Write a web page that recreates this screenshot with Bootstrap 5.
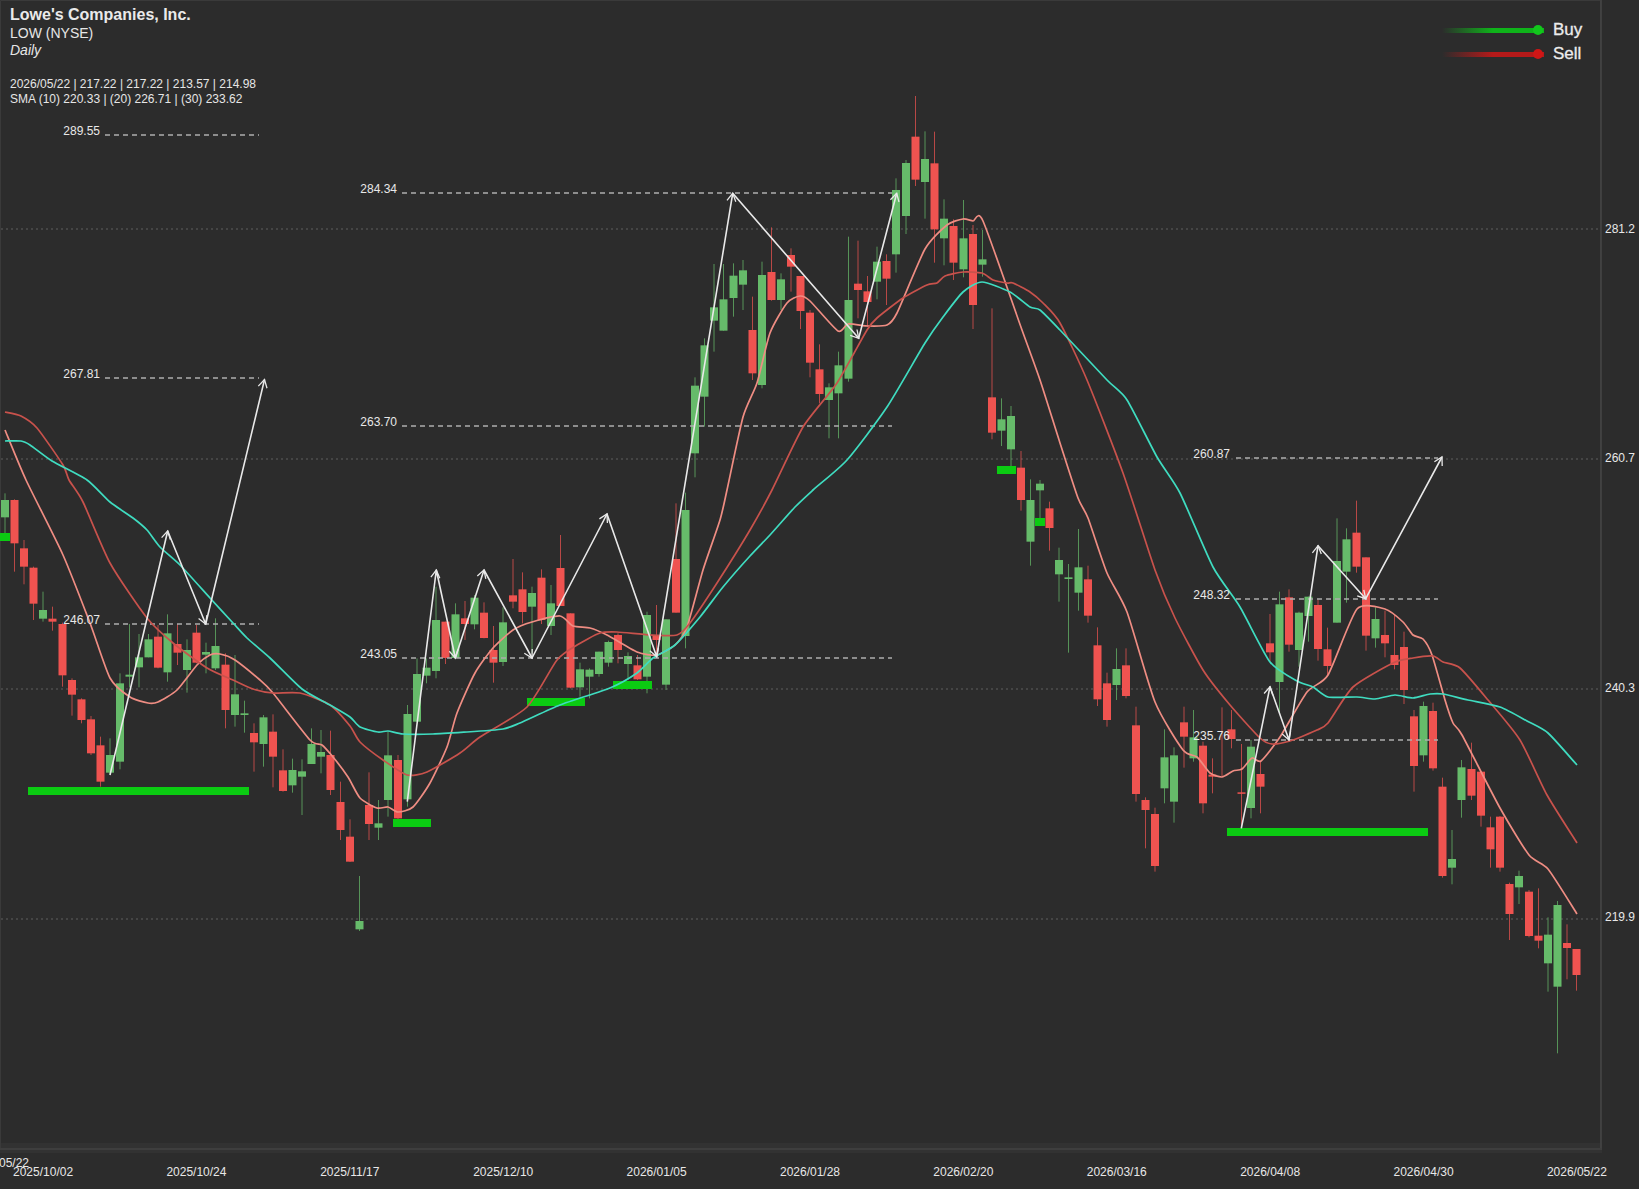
<!DOCTYPE html>
<html lang="en">
<head>
<meta charset="utf-8">
<title>Lowe's Companies, Inc. chart</title>
<link href="https://cdn.jsdelivr.net/npm/bootstrap@5.3.0/dist/css/bootstrap.min.css" rel="stylesheet">
<style>
html,body{height:100%;margin:0;background:#2c2c2c;overflow:hidden}
body,svg text{font-family:"Liberation Sans",Arial,sans-serif;color:#e8e8e8}
.screen{width:1639px;height:1189px}
.plot{width:1602px;height:1150px;flex:none}
.plot svg{display:block;overflow:visible}
.head{top:5px;left:10px;line-height:1;pointer-events:none}
.head .t{font-size:16px;font-weight:700;line-height:19px;color:#eaeaea}
.head .s{font-size:14px;line-height:18px;color:#e6e6e6}
.head .d{font-size:14px;line-height:16px;font-style:italic;color:#e6e6e6}
.head .q{font-size:12px;line-height:15px;margin-top:19px;color:#e6e6e6}
.head .q2{margin-top:0}
.legend{top:20px;right:0;gap:4px;width:160px}
.legend .row-l{height:20px;gap:10px}
.legend .bar{width:102px;height:5px}
.legend .buy .bar{background:linear-gradient(90deg,rgba(12,200,20,0),#0fb31a 50%,#0fb31a)}
.legend .sell .bar{background:linear-gradient(90deg,rgba(200,20,20,0),#b51a1a 50%,#b51a1a)}
.legend .dot{width:10px;height:10px;margin-left:-11px;flex:none}
.legend .buy .dot{background:#12c61c}
.legend .sell .dot{background:#d01616}
.legend .lab{font-size:17px;line-height:20px;color:#ececec;-webkit-text-stroke:.3px #ececec}
.yaxis{width:37px;padding:222px 0 0 3px;gap:215.4px;font-size:12px;line-height:14px}
.xaxis{height:39px;padding:15px 32px 0 13px;font-size:12px;line-height:14px}
.xaxis span{width:60px;text-align:center;white-space:nowrap}
.xaxis .tail{width:auto;top:6px;left:-1px}
.lvl{font-size:12px;fill:#e8e8e8}
</style>
</head>
<body>
<div class="screen d-flex flex-column">
  <div class="d-flex">
    <div class="plot position-relative">
      <svg id="chart" width="1602" height="1150" viewBox="0 0 1602 1150" xmlns="http://www.w3.org/2000/svg"></svg>
      <div class="head position-absolute">
        <div class="t">Lowe's Companies, Inc.</div>
        <div class="s">LOW (NYSE)</div>
        <div class="d">Daily</div>
        <div class="q">2026/05/22 | 217.22 | 217.22 | 213.57 | 214.98</div>
        <div class="q q2">SMA (10) 220.33 | (20) 226.71 | (30) 233.62</div>
      </div>
      <div class="legend position-absolute d-flex flex-column">
        <div class="buy row-l d-flex align-items-center"><div class="d-flex align-items-center"><div class="bar"></div><div class="dot rounded-circle"></div></div><span class="lab">Buy</span></div>
        <div class="sell row-l d-flex align-items-center"><div class="d-flex align-items-center"><div class="bar"></div><div class="dot rounded-circle"></div></div><span class="lab">Sell</span></div>
      </div>
    </div>
    <div class="yaxis d-flex flex-column"><div>281.2</div><div>260.7</div><div>240.3</div><div>219.9</div></div>
  </div>
  <div class="xaxis position-relative d-flex justify-content-between">
    <span class="tail position-absolute">05/22</span>
    <span>2025/10/02</span><span>2025/10/24</span><span>2025/11/17</span><span>2025/12/10</span><span>2026/01/05</span><span>2026/01/28</span><span>2026/02/20</span><span>2026/03/16</span><span>2026/04/08</span><span>2026/04/30</span><span>2026/05/22</span>
  </div>
</div>
<script>
// candles: colour wickTop bodyTop bodyBottom wickBottom, in crop units (y0 + z/3)
const seg=[
[480,`g 40 60 112 165;r 58 60 190 275;r 180 205 260 313;r 260 263 371 420;g 335 390 416 425;r 380 416 425 452;r 428 432 586 620;r 595 600 644 707;r 655 658 720 730;r 708 718 820 825;r 770 796 905 920;g 775 825 878 885;g 580 610 845 868;g 432 584 590 622;g 462 532 562 622;g 462 478 532 532;r 435 470 563 565;g 403 460 577 605;r 432 492 518 555;g 478 510 570 638;r 435 458 548 550;g 488 516 524 580;g 415 498 565 570;r 520 554 690 745;g 525 643 705 740;g 662 700 705 758;r 730 759 787 875;g 705 712 792 860;r 703 755 830 922;r 808 871 933 935;g 836 870 916 938;g 838 874 890 1005;g 745 792 852 852;g 750 816 830 880;r 752 825 930 945;r 905 966 1050 1080;r 1018 1070 1145 1146;g 1188 1323 1348 1353`],
[520,`r 757 855 912 960;g 840 910 923 960;g 635 706 840 890;r 705 720 895 900;g 555 582 838 860;g 415 462 605 605;g 415 443 467 490;g 200 300 453 475;r 305 305 414 432;g 250 283 414 418;r 243 295 312 360;g 225 233 313 328;r 247 278 354 355;r 318 390 428 488;g 262 307 426 438;r 117 226 245 265;r 157 208 276 310;g 200 219 260 400;r 148 173 300 312;g 195 250 318 345;r 45 144 258 258;r 280 280 503 505;g 428 448 502 530;g 445 449 470 535;g 395 395 462 470;g 362 366 428 440;r 340 345 390 430;g 397 408 432 480;r 405 436 478 480;g 275 285 470 520;r 255 345 360 410;g 298 298 494 510`],
[340,`r 490 657 818 818;g 458 510 888 925`],
[90,`g 862 887 1090 1162;g 745 766 920 1010;g 522 652 692 785;g 522 628 722 722;g 520 557 624 680;g 510 541 584 660;r 620 720 850 870;g 515 555 885 895;r 412 546 630 632;g 550 568 630 660;r 475 495 530 605;r 558 558 663 717;r 660 668 818 862;r 763 838 912 940;g 880 892 930 1045;g 785 826 910 1045;g 440 630 866 875;r 452 581 600 685;r 558 604 636 710;g 470 515 575 628;r 493 513 566 645;g 265 300 493 548;g 210 219 378 432;r 18 140 269 288;g 124 207 276 386;r 125 220 418 518;g 328 386 445 526;r 388 408 518 570;g 330 445 538 562;r 405 432 645 717;g 420 508 524 560;r 655 922 1028 1048;g 925 988 1022 1068;g 948 978 1078 1128`],
[380,`r 213 263 360 392;g 298 360 485 557;g 300 311 331 415;r 365 385 444 512;g 503 540 583 665;g 552 592 597 818;g 447 562 638 692;r 557 598 707 728;r 742 796 958 978;r 878 910 1020 1040;g 805 867 915 960;r 805 856 948 955;r 980 1036 1242 1265;r 1252 1260 1290 1405;r 1283 1302 1458 1475;g 1048 1132 1225 1270;g 1102 1126 1265 1328;r 980 1027 1070 1163;g 990 1072 1135 1145;r 1085 1097 1270 1300;r 1135 1184 1190 1240;r 982 1100 1100 1190;r 990 1048 1077 1105;r 1092 1237 1241 1345;g 1080 1100 1284 1315;r 1145 1182 1220 1300`],
[480,`r 402 490 517 545;g 335 373 606 700;r 328 352 494 515;g 395 398 510 560;g 350 350 408 485;r 358 375 507 542;r 443 508 558 585;g 115 243 428 428;g 145 178 275 368;r 62 158 260 278;r 232 232 467 512;g 382 417 475 503;r 392 465 490 532;r 405 525 555 568;r 455 501 630 672`],
[700,`r 30 49 198 275;g 5 18 166 185;r 8 33 205 212;r 233 260 528 533;g 390 477 503 553;g 180 202 300 353;r 128 207 287 300;r 215 215 347 380;r 350 382 448 503;r 348 350 503 515;r 548 552 642 720;g 512 528 562 612;r 570 575 708 712;r 565 707 722 745;g 652 704 790 875;g 603 615 860 1060;r 673 729 744 838;r 747 747 825 872`]
];
const RED='#ef5350',GRN='#66bb6a',px=i=>4.8+9.585*i;
let s='',n=0;
// frame
s+='<rect x="0" y="1143" width="1602" height="10" fill="#323232"/>';
s+='<path d="M0.5 0.5H1600.5V1148.5H0.5Z" fill="none" stroke="#3a3a3a"/><path d="M1601 0V1150" stroke="#444" stroke-width="1.6" fill="none"/><path d="M0 1149H1602" stroke="#3e3e3e" stroke-width="2" fill="none"/>';
// horizontal grid
[229,459,689,919].forEach(y=>s+=`<path d="M1 ${y}H1600" stroke="#5e5e5e" stroke-width="1" stroke-dasharray="2 3" fill="none"/>`);
// candles
seg.forEach(([y0,str])=>str.split(';').forEach(r=>{
  const p=r.split(' '),c=p[0]=='g'?GRN:RED,[a,b,d,e]=p.slice(1).map(v=>y0+v/3),x=Math.round(px(n)*2)/2;
  s+=`<path d="M${x} ${a}V${e}" stroke="${c}" stroke-opacity=".72" fill="none"/>`;
  if(d>b)s+=`<rect x="${x-4}" y="${b}" width="8" height="${Math.max(d-b,1.5)}" fill="${c}"/>`;
  n++;
}));
// support markers
[[28,249,787],[0,10,533],[393,431,819],[527,585,698],[613,652,681],[997,1016,466],[1035,1045,518],[1227,1428,828]].forEach(([a,b,y])=>s+=`<rect x="${a}" y="${y}" width="${b-a}" height="8" fill="#0bcb12"/>`);
// price levels
[[105,259,135],[105,259,378],[105,259,624],[402,892,193],[402,892,426],[402,892,658],[1236,1438,458],[1236,1438,599],[1236,1438,740]].forEach(([a,b,y])=>{
  s+=`<path d="M${a} ${y}H${b}" stroke="#adadad" stroke-width="1.4" stroke-dasharray="5 4" fill="none"/>`;
});
// moving averages, smoothed through the sampled points
const sma=[
['#ef8d83','5 430 26 480 63 555 90 623 110 678 130 697 148 703 158 702 177 690 197 665 210 655 220 654 235 660 260 680 273 693 310 740 322 745 333 757 348 777 360 798 377 808 388 807 398 812 413 807 430 783 447 747 457 713 475 673 493 648 513 630 532 622 560 616 573 626 590 628 607 635 637 652 657 655 675 645 687 627 703 570 720 520 727 490 743 417 757 383 770 333 787 303 800 296 810 301 838 331 848 324 868 326 887 325 897 313 925 249 947 225 963 219 973 221 983 221 1022 330 1040 380 1060 443 1078 498 1088 518 1107 573 1127 612 1155 702 1183 750 1197 757 1210 773 1222 777 1233 771 1242 769 1252 758 1261 761 1280 737 1307 692 1328 675 1357 609 1385 609 1403 622 1413 635 1423 639 1432 655 1445 700 1453 723 1462 735 1500 808 1529 855 1548 869 1577 914'],
['#c8524c','5 412 21 416 37 428 63 465 69 480 83 502 110 563 147 618 173 643 207 668 233 680 253 689 273 693 300 693 330 705 350 726 360 742 383 760 407 775 427 772 460 753 480 737 527 707 557 660 577 645 600 633 617 632 650 635 677 635 690 623 717 583 750 530 772 490 803 427 837 383 867 330 877 318 903 298 927 285 937 283 945 276 963 272 982 273 993 280 1007 283 1013 283 1030 292 1043 303 1060 323 1087 380 1123 473 1155 570 1175 618 1203 670 1230 705 1260 738 1272 744 1290 741 1317 730 1328 723 1353 687 1393 663 1413 658 1433 656 1443 662 1460 668 1488 700 1520 740 1547 795 1577 843'],
['#3fdcc0','5 441 21 441 30 445 52 461 87 480 110 502 133 518 147 530 160 547 180 565 210 598 233 623 247 638 270 658 302 689 330 705 350 717 360 727 378 732 388 731 403 734 433 734 467 732 503 729 520 723 560 705 610 688 637 673 653 658 675 645 700 617 723 587 750 556 770 535 795 507 813 490 847 460 887 407 925 343 943 317 963 292 982 282 1010 292 1030 307 1040 310 1060 330 1107 380 1127 400 1157 457 1180 493 1213 567 1240 607 1270 662 1297 681 1313 687 1328 697 1357 697 1375 699 1395 695 1413 698 1430 694 1443 694 1468 700 1500 707 1527 721 1548 733 1577 765']
];
function smooth(str){
  const v=str.split(' ').map(Number),P=[];
  for(let i=0;i<v.length;i+=2)P.push([v[i],v[i+1]]);
  let d=`M${P[0][0]} ${P[0][1]}`;
  for(let i=0;i<P.length-1;i++){
    const a=P[Math.max(i-1,0)],b=P[i],c=P[i+1],e=P[Math.min(i+2,P.length-1)];
    const f=.11;
    d+=`C${(b[0]+(c[0]-a[0])*f).toFixed(1)} ${(b[1]+(c[1]-a[1])*f).toFixed(1)} ${(c[0]-(e[0]-b[0])*f).toFixed(1)} ${(c[1]-(e[1]-b[1])*f).toFixed(1)} ${c[0]} ${c[1]}`;
  }
  return d;
}
sma.forEach(([c,p])=>s+=`<path d="${smooth(p)}" fill="none" stroke="${c}" stroke-width="1.7" stroke-linejoin="round"/>`);
// zigzag arrows
const zig=[
[[110,775],[167.7,531],[205.7,624],[264.5,379.6]],
[[407.3,801.7],[436.3,570],[455.3,658],[484,570],[532,658],[607,514],[656.7,656.7],[732.7,193.3],[858.7,338.3],[896.7,193.3]],
[[1241.3,828.3],[1270,686.7],[1289,740],[1318,545.7],[1365.7,598.7],[1442,457]]
];
zig.forEach(z=>{
  s+=`<polyline points="${z.map(p=>p.join(' ')).join(' ')}" fill="none" stroke="#e9e9e9" stroke-width="1.6" stroke-linejoin="round"/>`;
  z.slice(1).forEach((p,k)=>{
    const q=z[k],t=Math.atan2(p[1]-q[1],p[0]-q[0]),L=9,A=.52;
    const m=o=>[p[0]-L*Math.cos(t+o),p[1]-L*Math.sin(t+o)].map(v=>v.toFixed(1)).join(' ');
    s+=`<path d="M${m(A)}L${p.join(' ')}L${m(-A)}" fill="none" stroke="#e9e9e9" stroke-width="1.3"/>`;
  });
});
// level labels
[[100,135,'289.55'],[100,378,'267.81'],[100,624,'246.07'],[397,193,'284.34'],[397,426,'263.70'],[397,658,'243.05'],[1230,458,'260.87'],[1230,599,'248.32'],[1230,740,'235.76']].forEach(([x,y,t])=>s+=`<text class="lvl" x="${x}" y="${y}" text-anchor="end">${t}</text>`);
document.getElementById('chart').innerHTML=s;
</script>
<script src="https://cdn.jsdelivr.net/npm/bootstrap@5.3.0/dist/js/bootstrap.bundle.min.js"></script>
</body>
</html>
